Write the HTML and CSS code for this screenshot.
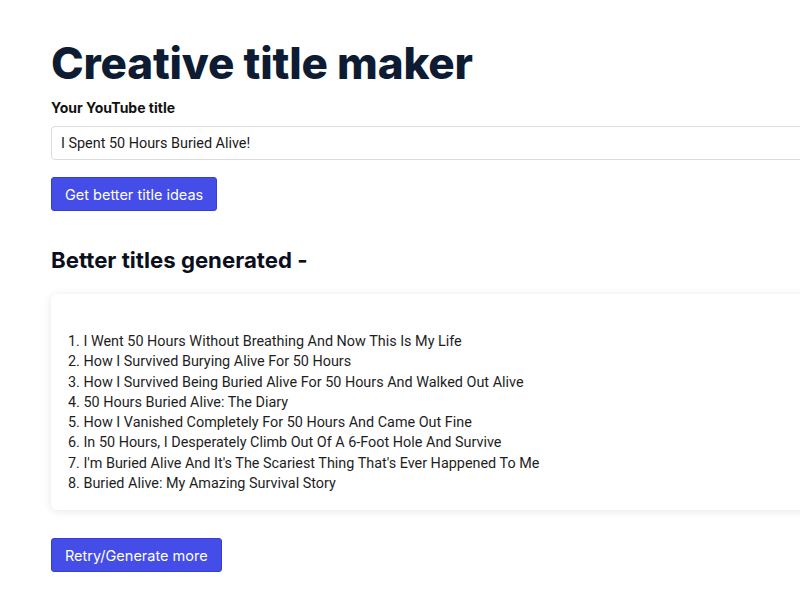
FILE: index.html
```html
<!DOCTYPE html>
<html lang="en">
<head>
<meta charset="utf-8">
<title>Creative title maker</title>
<link rel="stylesheet" href="styles.css">
</head>
<body>
<main class="page">
  <h1 class="title">Creative title maker</h1>
  <label class="label" for="yt">Your YouTube title</label>
  <input class="input" id="yt" type="text" value="I Spent 50 Hours Buried Alive!">
  <button class="btn btn-first" type="button">Get better title ideas</button>
  <h2 class="subtitle">Better titles generated -</h2>
  <div class="card">
    <ol class="list">
      <li>1. I Went 50 Hours Without Breathing And Now This Is My Life</li>
      <li>2. How I Survived Burying Alive For 50 Hours</li>
      <li>3. How I Survived Being Buried Alive For 50 Hours And Walked Out Alive</li>
      <li>4. 50 Hours Buried Alive: The Diary</li>
      <li>5. How I Vanished Completely For 50 Hours And Came Out Fine</li>
      <li>6. In 50 Hours, I Desperately Climb Out Of A 6-Foot Hole And Survive</li>
      <li>7. I'm Buried Alive And It's The Scariest Thing That's Ever Happened To Me</li>
      <li>8. Buried Alive: My Amazing Survival Story</li>
    </ol>
  </div>
  <button class="btn btn-retry" type="button">Retry/Generate more</button>
</main>
</body>
</html>
```
FILE: styles.css
```css
html, body {
  margin: 0;
  padding: 0;
  background: #ffffff;
  overflow: hidden;
}
body {
  font-family: Inter, "Noto Sans", sans-serif;
  color: #1a1a1a;
}
.page {
  width: 1000px;
  padding: 36px 0 0 51px;
  display: flex;
  flex-direction: column;
  align-items: flex-start;
}
.title {
  margin: 0;
  font-size: 44px;
  font-weight: 800;
  line-height: 54px;
  color: #0d1b33;
  letter-spacing: -0.2px;
}
.label {
  margin-top: 9px;
  font-size: 14px;
  font-weight: 700;
  line-height: 18px;
  color: #111;
}
.input {
  box-sizing: border-box;
  margin-top: 9px;
  width: 100%;
  height: 34px;
  padding: 0 9px;
  border: 1px solid #dcdcdc;
  border-radius: 4px;
  font-family: Roboto, Inter, sans-serif;
  font-size: 14.4px;
  color: #1a1a1a;
  background: #fff;
}
.btn {
  box-sizing: border-box;
  height: 34px;
  padding: 0 13px;
  border: 1px solid #343ed4;
  border-radius: 3px;
  background: #444de8;
  color: #fff;
  font-family: Inter, sans-serif;
  font-size: 14.5px;
  font-weight: 400;
}
.btn-first {
  margin-top: 17px;
}
.subtitle {
  margin: 35px 0 0;
  font-size: 22.2px;
  font-weight: 700;
  line-height: 28px;
  color: #0b0f1c;
}
.card {
  box-sizing: border-box;
  margin-top: 20px;
  width: 100%;
  padding: 38px 17px 16px;
  border-radius: 6px;
  background: #fff;
  box-shadow: 0 1px 8px rgba(0, 0, 0, 0.1);
}
.list {
  margin: 0;
  padding: 0;
  list-style: none;
  font-family: Roboto, Inter, sans-serif;
  font-size: 14.4px;
  line-height: 20.3px;
  color: #1e1e1e;
}
.btn-retry {
  margin-top: 28px;
}
```
